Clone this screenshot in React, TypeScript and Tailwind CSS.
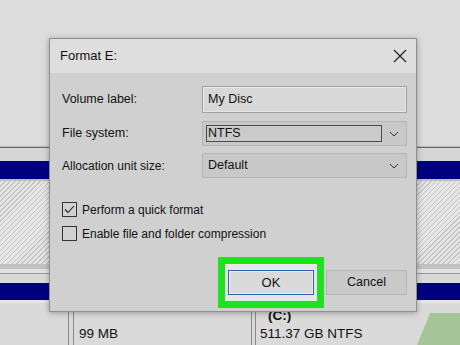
import React from "react";

const ui = { fontFamily: '"Liberation Sans", Arial, sans-serif' };

function Chevron() {
  return (
    <svg width="10" height="6" viewBox="0 0 10 6" className="shrink-0">
      <path d="M1 1 L5 5 L9 1" fill="none" stroke="#333" strokeWidth="1" />
    </svg>
  );
}

function CheckRow({ checked, label }: { checked?: boolean; label: string }) {
  return (
    <div className="flex items-center gap-[5px] h-[15px]">
      <div className="w-[15px] h-[15px] border border-[#333] bg-[#d2d2d2] flex items-center justify-center">
        {checked && (
          <svg width="11" height="9" viewBox="0 0 11 9">
            <path d="M1 4.5 L4 7.5 L10 1" fill="none" stroke="#222" strokeWidth="1.1" />
          </svg>
        )}
      </div>
      <span className="text-[12px] text-[#111] leading-none">{label}</span>
    </div>
  );
}

function Background() {
  return (
    <div className="flex flex-col w-[460px] h-[345px] bg-[#dcdcdc]">
      <div className="h-[146px] bg-[#dcdcdc]" />
      <div className="h-px bg-[#b8b8b8]" />
      <div className="h-px bg-[#6a6a6a]" />
      <div className="h-[13px] bg-[#d6d6d6]" />
      <div className="h-[18px] bg-[#00007f]" />
      <div className="h-[2px] bg-[#bdbdbd]" />
      <div className="h-[83px] bg-[repeating-linear-gradient(135deg,#c4c4c4_0px,#c4c4c4_1px,#e6e6e6_1px,#e6e6e6_3.5px)]" />
      <div className="h-[5px] bg-[#c2c2c2]" />
      <div className="h-[4px] bg-[#e2e2e2]" />
      <div className="h-px bg-[#9a9a9a]" />
      <div className="h-[9px] bg-[#d9d9d9]" />
      <div className="h-[17px] bg-[#00007f]" />
      <div className="h-[3px] bg-[#e6e6e6]" />
      <div className="flex-1 flex bg-[#dadada]">
        <div className="w-[68px]" />
        <div className="w-px bg-[#8a8a8a]" />
        <div className="w-[4px]" />
        <div className="w-px bg-[#8a8a8a]" />
        <div className="w-[177px] pl-[5px] flex flex-col justify-end pb-[2px]">
          <span className="text-[13.5px] text-[#111] leading-[18px]">99 MB</span>
        </div>
        <div className="w-px bg-[#8a8a8a]" />
        <div className="w-[3px]" />
        <div className="w-px bg-[#8a8a8a]" />
        <div className="flex-1 pl-[4px] flex flex-col justify-end pb-[2px]">
          <span className="text-[13.5px] font-bold text-[#111] leading-[18px] pl-[8px]">(C:)</span>
          <span className="text-[13.5px] text-[#111] leading-[18px]">511.37 GB NTFS</span>
        </div>
      </div>
    </div>
  );
}

function Dialog() {
  return (
    <div className="absolute left-[49px] top-[38px] w-[368px] h-[274px] flex flex-col border border-[#8e8e8e] bg-[#d0d0d0] shadow-[0_1px_6px_rgba(0,0,0,0.3)]">
      <div className="h-[34px] bg-[#dedede] flex items-center justify-between pl-[10px] pr-[9px]">
        <span className="text-[13px] text-[#111]">Format E:</span>
        <svg width="14" height="14" viewBox="0 0 14 14">
          <path d="M1 1 L13 13 M13 1 L1 13" stroke="#222" strokeWidth="1.2" />
        </svg>
      </div>
      <div className="flex-1 flex flex-col pl-[12px] pr-[9px] pt-[13px]">
        <div className="flex items-center justify-between">
          <span className="text-[12.5px] text-[#111]">Volume label:</span>
          <div className="w-[205px] h-[27px] border border-[#a2a2a2] bg-[#d8d8d8] shadow-[inset_0_0_0_1px_#e6e6e6] flex items-center pl-[5px]">
            <span className="text-[12.5px] text-[#111]">My Disc</span>
          </div>
        </div>
        <div className="flex items-center justify-between mt-[8px]">
          <span className="text-[12.5px] text-[#111]">File system:</span>
          <div className="w-[205px] h-[25px] border border-[#b4b4b4] bg-[#c8c8c8] flex items-center pl-[3px] pr-[7px] gap-[7px]">
            <div className="w-[179px] h-[17px] border border-[#4a4a4a] bg-[#cacaca] flex items-center pl-px">
              <span className="text-[12.5px] text-[#111] leading-none">NTFS</span>
            </div>
            <Chevron />
          </div>
        </div>
        <div className="flex items-center justify-between mt-[7px]">
          <span className="text-[12px] text-[#111]">Allocation unit size:</span>
          <div className="w-[205px] h-[25px] border border-[#b4b4b4] bg-[#c8c8c8] flex items-center justify-between pl-[5px] pr-[7px]">
            <span className="text-[12.5px] text-[#111] leading-none">Default</span>
            <Chevron />
          </div>
        </div>
        <div className="mt-[24px] flex flex-col gap-[9px]">
          <CheckRow checked label="Perform a quick format" />
          <CheckRow label="Enable file and folder compression" />
        </div>
        <div className="flex items-center justify-end gap-[2px] mt-[16px]">
          <div className="border-[7px] border-[#1fe11f] bg-[#e6e6e6] px-[3px] py-[6px]">
            <div className="w-[86px] h-[25px] border border-[#2a64b8] bg-[#dadada] shadow-[inset_0_0_0_1px_#ececec] flex items-center justify-center">
              <span className="text-[13px] text-[#111]">OK</span>
            </div>
          </div>
          <div className="w-[81px] h-[25px] border border-[#b6b6b6] bg-[#c9c9c9] flex items-center justify-center">
            <span className="text-[12.5px] text-[#111]">Cancel</span>
          </div>
        </div>
      </div>
    </div>
  );
}

export default function App() {
  return (
    <div className="relative w-[460px] h-[345px] overflow-hidden" style={ui}>
      <Background />
      <svg className="absolute left-[417px] top-[313px]" width="43" height="32" viewBox="0 0 43 32">
        <polygon points="13,0 43,0 43,32 0,32" fill="#a6c596" />
      </svg>
      <Dialog />
    </div>
  );
}
